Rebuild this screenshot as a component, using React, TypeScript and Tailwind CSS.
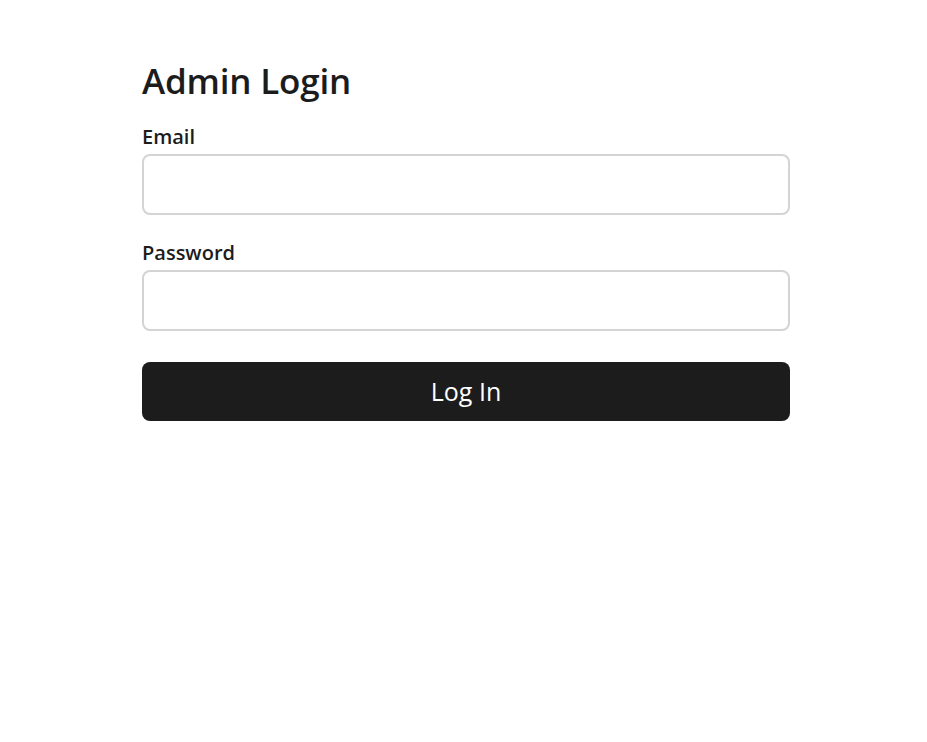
export default function App() {
  return (
    <div
      className="min-h-[742px] bg-white text-[#1c1c1c]"
      style={{ fontFamily: '"Open Sans", "Noto Sans", sans-serif' }}
    >
      <div className="ml-[142px] w-[648px] pt-[58px]">
        <h1 className="text-[35px] font-semibold leading-[46px] tracking-[-0.2px]">Admin Login</h1>
        <form className="mt-[19px] flex flex-col" onSubmit={(e) => e.preventDefault()}>
          <label className="text-[20px] font-semibold leading-[28px]">Email</label>
          <input
            type="email"
            className="mt-[3px] h-[61px] w-full rounded-[8px] border-2 border-[#d4d4d4] px-3 outline-none"
          />
          <label className="mt-[24px] text-[20px] font-semibold leading-[28px]">Password</label>
          <input
            type="password"
            className="mt-[3px] h-[61px] w-full rounded-[8px] border-2 border-[#d4d4d4] px-3 outline-none"
          />
          <button
            type="submit"
            className="mt-[31px] h-[59px] w-full rounded-[8px] bg-[#1c1c1c] text-[25px] text-white"
          >
            Log In
          </button>
        </form>
      </div>
    </div>
  );
}
